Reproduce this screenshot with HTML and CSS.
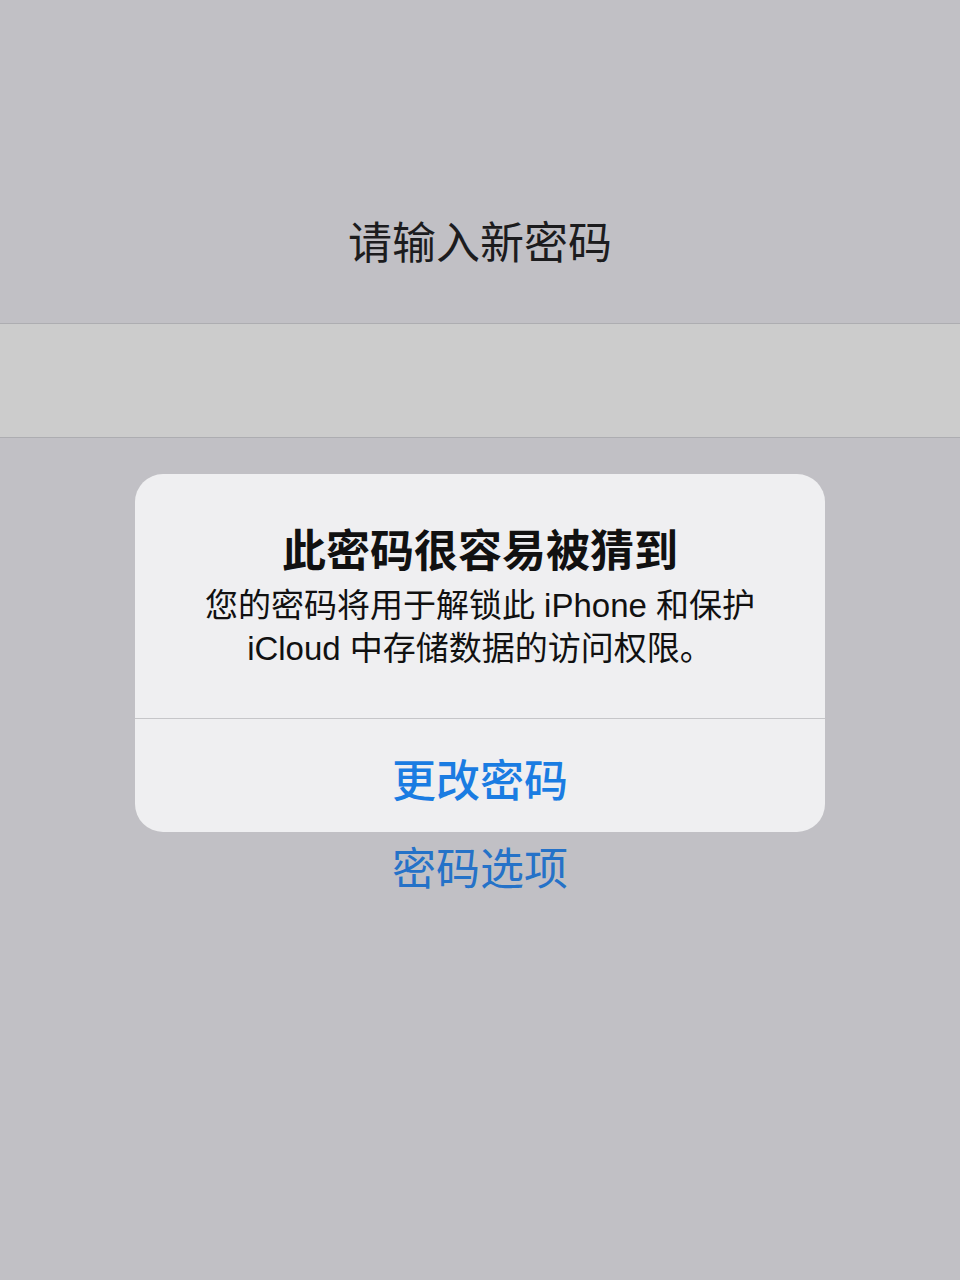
FILE: index.html
```html
<!DOCTYPE html>
<html lang="zh-CN">
<head>
    <meta charset="UTF-8">
    <meta name="viewport" content="width=device-width, initial-scale=1.0">
    <title>设置密码</title>
    <link rel="stylesheet" href="styles.css">
</head>
<body>
    <div class="screen">
        <header class="header">
            <h1 class="prompt">请输入新密码</h1>
        </header>

        <div class="inputBand"></div>

        <div class="options">
            <a class="optionsLink" href="#">密码选项</a>
        </div>

        <!-- weak password alert, sits over the page -->
        <div class="alert">
            <div class="alertBody">
                <h2 class="alertTitle">此密码很容易被猜到</h2>
                <p class="alertMsg">您的密码将用于解锁此 iPhone 和保护<br>iCloud 中存储数据的访问权限。</p>
            </div>
            <button class="alertButton">更改密码</button>
        </div>
    </div>
</body>
</html>
```

FILE: styles.css
```css
body {
    margin: 0;
    background-color: #c1c0c5;
    font-family: "Liberation Sans", "Noto Sans CJK SC", sans-serif;
    overflow: hidden;
}

.screen {
    position: relative;
    width: 960px;
    height: 1280px;
}

.header {
    height: 323px;
    box-sizing: border-box;
    display: flex;
    justify-content: center;
    align-items: flex-end;
    padding-bottom: 49px;
}

.prompt {
    margin: 0;
    font-size: 44px;
    font-weight: 400;
    line-height: 60px;
    color: #1c1c1e;
}

.inputBand {
    height: 113px;
    background-color: #cccccc;
    border-top: 1px solid #adadb1;
    border-bottom: 1px solid #adadb1;
}

.options {
    display: flex;
    justify-content: center;
    padding-top: 402px;
}

.optionsLink {
    font-size: 44px;
    line-height: 60px;
    color: #2572c8;
    text-decoration: none;
}

.alert {
    position: absolute;
    top: 474px;
    left: 135px;
    width: 690px;
    height: 358px;
    background-color: #efeff1;
    border-radius: 28px;
    display: flex;
    flex-direction: column;
    overflow: hidden;
}

.alertBody {
    padding: 49px 20px 48px;
    text-align: center;
    border-bottom: 1px solid #c6c6c9;
}

.alertTitle {
    margin: 0;
    font-size: 44px;
    font-weight: 700;
    line-height: 58px;
    color: #111;
}

.alertMsg {
    margin: 3px 0 0;
    font-size: 33px;
    line-height: 43px;
    color: #111;
}

.alertButton {
    flex: 1;
    border: none;
    background: none;
    padding: 4px 0 0;
    font-family: inherit;
    font-size: 44px;
    font-weight: 500;
    color: #1a7ce2;
    cursor: pointer;
}
```
